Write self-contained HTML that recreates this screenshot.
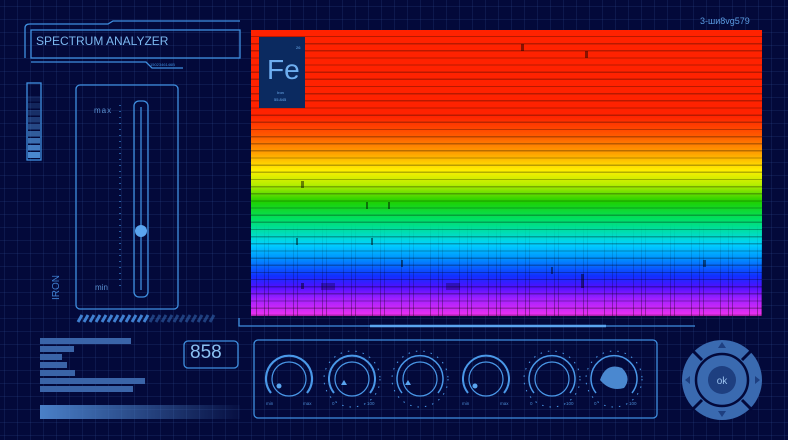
<!DOCTYPE html>
<html><head><style>
body{margin:0;width:788px;height:440px;overflow:hidden;background:#03093a;font-family:"Liberation Sans",sans-serif;position:relative}
.grid{position:absolute;inset:0;background-image:linear-gradient(rgba(70,110,190,.14) 1px,transparent 1px),linear-gradient(90deg,rgba(70,110,190,.14) 1px,transparent 1px);background-size:13px 13px;background-position:4px 6px}
.a{position:absolute}
.spec{left:251px;top:30px;width:511px;height:286px;
background:repeating-linear-gradient(180deg,transparent 0,transparent 5.8px,rgba(0,0,0,.28) 5.8px,rgba(0,0,0,.28) 7.15px),
linear-gradient(180deg,#ff2200 0,#ff2200 30%,#ff5a00 37%,#ffa000 43%,#ffee00 49%,#b8ee00 54%,#20d000 60%,#00e060 66%,#00dcc8 72%,#00d0ff 75%,#0090ff 80%,#1030ff 86%,#5010ff 90%,#a020ff 94%,#f030f0 100%)}
.tex{left:251px;top:222px;width:511px;height:94px;opacity:.35;
background:repeating-linear-gradient(90deg,transparent 0,transparent 5px,#000 5px,#000 6px,transparent 6px,transparent 13px,#000 13px,#000 14px,transparent 14px,transparent 17px,#000 17px,#000 18px,transparent 18px,transparent 29px);
-webkit-mask-image:linear-gradient(180deg,transparent,#000);mask-image:linear-gradient(180deg,transparent,#000)}
.bar{position:absolute;left:40px;height:6px;background:#3a64a8}
</style></head><body>
<div class="grid"></div>
<svg class="a" style="left:0;top:0" width="788" height="440">
<g fill="none" stroke="#3f8fe0" stroke-width="1.3">
<path d="M25 58 V28 Q25 24 30 24 H108 L113 21 H240"/>
<rect x="31" y="30" width="209" height="28"/>
<path d="M31 62 H146 L152 68 H183"/>
<rect x="76" y="85" width="102" height="224" rx="4"/>
<rect x="134" y="101" width="14" height="196" rx="5"/>
<line x1="141" y1="107" x2="141" y2="290"/>
<rect x="27" y="83" width="14" height="77"/>
<path d="M239 318 V326 H695"/>
<rect x="254" y="340" width="403" height="78" rx="4"/>
<rect x="184" y="341" width="54" height="27" rx="4"/>
</g>
<g stroke="#3f8fe0" stroke-width="1.2" stroke-dasharray="1 5"><line x1="120" y1="105" x2="120" y2="290"/></g>
<line x1="370" y1="326" x2="606" y2="326" stroke="#5aa5ef" stroke-width="2.5"/>
<circle cx="141" cy="231" r="6" fill="#5aa5ef"/>
<g fill="#4a88d0">
<rect x="28" y="152" width="12" height="6"/><rect x="28" y="145" width="12" height="5.5" opacity=".9"/><rect x="28" y="138" width="12" height="5.5" opacity=".8"/><rect x="28" y="131" width="12" height="5.5" opacity=".65"/><rect x="28" y="124" width="12" height="5.5" opacity=".5"/><rect x="28" y="117" width="12" height="5.5" opacity=".4"/><rect x="28" y="110" width="12" height="5.5" opacity=".3"/><rect x="28" y="103" width="12" height="5.5" opacity=".22"/><rect x="28" y="96" width="12" height="5.5" opacity=".15"/>
</g>
<g stroke="#3f7fd0" stroke-width="3">
<path d="M78 322 l4 -7 M84 322 l4 -7 M90 322 l4 -7 M96 322 l4 -7 M102 322 l4 -7 M108 322 l4 -7 M114 322 l4 -7 M120 322 l4 -7 M126 322 l4 -7 M132 322 l4 -7 M138 322 l4 -7 M144 322 l4 -7" />
<path d="M150 322 l4 -7 M156 322 l4 -7 M162 322 l4 -7 M168 322 l4 -7 M174 322 l4 -7 M180 322 l4 -7 M186 322 l4 -7 M192 322 l4 -7 M198 322 l4 -7 M204 322 l4 -7 M210 322 l4 -7" opacity=".45"/>
</g>
<defs><linearGradient id="gb"><stop offset="0" stop-color="#4a80c8"/><stop offset="1" stop-color="#4a80c8" stop-opacity=".05"/></linearGradient></defs>
<rect x="40" y="405" width="200" height="14" fill="url(#gb)"/>
<g fill="none" stroke="#4a98e8" stroke-width="1.2">
<circle cx="289" cy="379" r="17"/><path d="M271 393 A23 23 0 1 1 307 393" stroke-width="2.2"/>
<circle cx="352" cy="379" r="17"/><path d="M334 393 A23 23 0 1 1 370 393" stroke-width="2"/>
<circle cx="420" cy="379" r="17"/><path d="M402 393 A23 23 0 1 1 438 393" stroke-width="1.5"/>
<circle cx="486" cy="379" r="17"/><path d="M468 393 A23 23 0 1 1 504 393" stroke-width="2"/>
<circle cx="552" cy="379" r="17"/><path d="M534 393 A23 23 0 1 1 570 393" stroke-width="1.5"/>
<path d="M596 393 A23 23 0 1 1 632 393" stroke-width="1.5"/>
</g>
<g stroke="#4a98e8" stroke-width="1" stroke-dasharray="1.5 6">
<circle cx="352" cy="379" r="28" fill="none"/><circle cx="420" cy="379" r="28" fill="none"/><circle cx="552" cy="379" r="28" fill="none"/><circle cx="614" cy="379" r="28" fill="none"/>
</g>
<path d="M600 380 Q606 362 622 368 Q632 378 624 388 Q610 392 600 380Z" fill="#4a88d0"/>
<g fill="#5aa5ef"><circle cx="279" cy="386" r="2.5"/><circle cx="475" cy="386" r="2.5"/><path d="M341 385 l3 -5 3 5z"/><path d="M405 385 l3 -5 3 5z"/></g>
<g font-size="4.5" fill="#4a88d0"><text x="266" y="405">min</text><text x="303" y="405">max</text><text x="332" y="405">0</text><text x="367" y="405">100</text><text x="462" y="405">min</text><text x="500" y="405">max</text><text x="530" y="405">0</text><text x="566" y="405">100</text><text x="594" y="405">0</text><text x="629" y="405">100</text></g>
<g fill="#3a6ab0"><circle cx="722" cy="380" r="40"/></g>
<circle cx="722" cy="380" r="26" fill="none" stroke="#03093a" stroke-width="2.5"/>
<g stroke="#03093a" stroke-width="3"><line x1="692" y1="350" x2="702" y2="360"/><line x1="752" y1="350" x2="742" y2="360"/><line x1="692" y1="410" x2="702" y2="400"/><line x1="752" y1="410" x2="742" y2="400"/></g>
<circle cx="722" cy="380" r="14" fill="#1e3f80"/>
<text x="722" y="384" font-size="10" fill="#9cc4f0" text-anchor="middle">ok</text>
<g fill="#1e3f80"><path d="M718 348 l4 -6 4 6z"/><path d="M718 411 l4 6 4 -6z"/><path d="M690 376 l-5 4 5 4z"/><path d="M755 376 l5 4 -5 4z"/></g>
</svg>
<div class="a" style="left:36px;top:34px;color:#7cb8f0;font-size:12px">SPECTRUM ANALYZER</div>
<div class="a" style="left:150px;top:62px;color:#3f8fe0;font-size:4px">1502346146B</div>
<div class="a" style="left:94px;top:106px;color:#5a90d0;font-size:8px;letter-spacing:1px">max</div>
<div class="a" style="left:95px;top:283px;color:#5a90d0;font-size:8px">min</div>
<div class="a" style="left:51px;top:300px;color:#3f7fd0;font-size:10px;transform:rotate(-90deg);transform-origin:0 0">IRON</div>
<div class="a" style="left:700px;top:16px;color:#5a9ae0;font-size:9px">3-ши8vg579</div>
<div class="a" style="left:190px;top:342px;color:#8ac0f0;font-size:19px">858</div>
<div class="bar" style="top:338px;width:91px"></div>
<div class="bar" style="top:346px;width:34px"></div>
<div class="bar" style="top:354px;width:22px"></div>
<div class="bar" style="top:362px;width:27px"></div>
<div class="bar" style="top:370px;width:35px"></div>
<div class="bar" style="top:378px;width:105px"></div>
<div class="bar" style="top:386px;width:93px"></div>
<div class="a spec"></div>
<div class="a tex"></div>
<svg class="a" style="left:251px;top:30px" width="511" height="286">
<g fill="#000" opacity=".45">
<rect x="50" y="151" width="3" height="7"/><rect x="270" y="14" width="3" height="7"/><rect x="334" y="21" width="3" height="7"/><rect x="115" y="172" width="2" height="7"/><rect x="137" y="172" width="2" height="7"/><rect x="45" y="208" width="2" height="7"/><rect x="120" y="208" width="2" height="7"/><rect x="452" y="230" width="3" height="7"/><rect x="50" y="253" width="3" height="6"/><rect x="70" y="253" width="14" height="7" opacity=".6"/><rect x="195" y="253" width="14" height="7" opacity=".6"/><rect x="300" y="237" width="2" height="7"/>
<rect x="150" y="230" width="2" height="7"/><rect x="330" y="244" width="3" height="14"/>
</g>
</svg>
<div class="a" style="left:259px;top:37px;width:46px;height:71px;background:#0b2a60">
<div class="a" style="left:8px;top:17px;font-size:28px;color:#6eaef0">Fe</div>
<div class="a" style="left:37px;top:8px;font-size:4px;color:#6eaef0">26</div>
<div class="a" style="left:18px;top:53px;font-size:4px;color:#6eaef0">Iron</div>
<div class="a" style="left:15px;top:60px;font-size:4px;color:#6eaef0">55.845</div>
</div>
</body></html>
